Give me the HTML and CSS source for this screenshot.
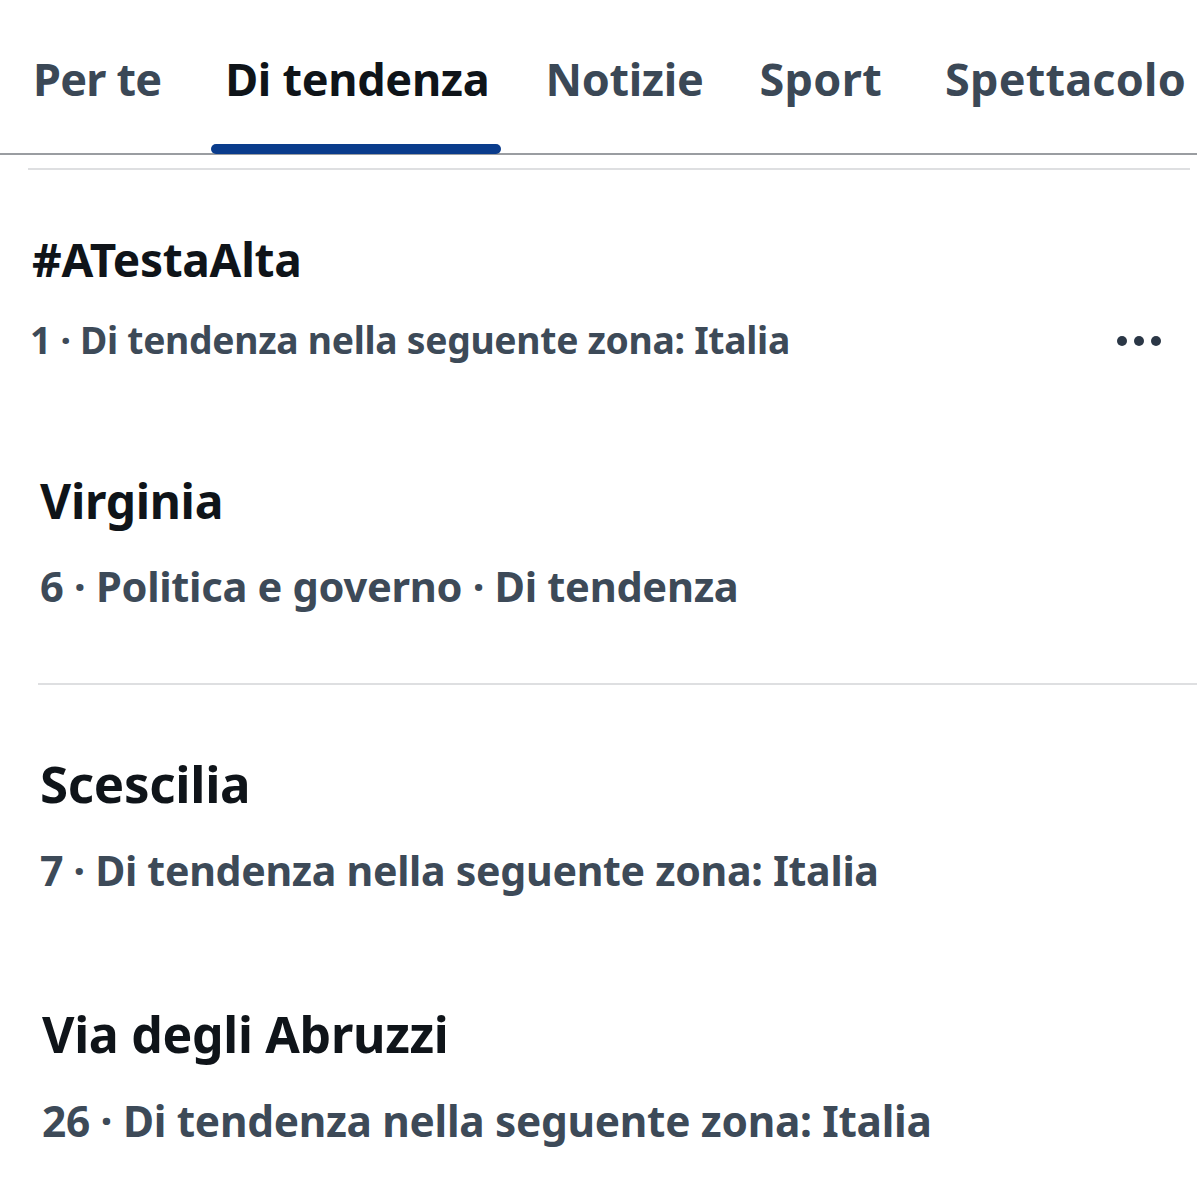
FILE: index.html
```html
<!DOCTYPE html>
<html lang="it">
<head>
<meta charset="utf-8">
<link rel="stylesheet" href="styles.css">
</head>
<body>
<div class="page">
  <nav class="tabs">
    <div class="tab tab-1">Per te</div>
    <div class="tab tab-2 active">Di tendenza</div>
    <div class="tab tab-3">Notizie</div>
    <div class="tab tab-4">Sport</div>
    <div class="tab tab-5">Spettacolo</div>
  </nav>
  <div class="rule-top"></div>

  <section class="trend trend-1">
    <div class="title">#ATestaAlta</div>
    <div class="meta-row">
      <div class="meta">1 · Di tendenza nella seguente zona: Italia</div>
      <div class="more"><span></span><span></span><span></span></div>
    </div>
  </section>

  <section class="trend trend-2">
    <div class="title">Virginia</div>
    <div class="meta">6 · Politica e governo · Di tendenza</div>
  </section>
  <div class="divider"></div>

  <section class="trend trend-3">
    <div class="title">Scescilia</div>
    <div class="meta">7 · Di tendenza nella seguente zona: Italia</div>
  </section>

  <section class="trend trend-4">
    <div class="title">Via degli Abruzzi</div>
    <div class="meta">26 · Di tendenza nella seguente zona: Italia</div>
  </section>
</div>
</body>
</html>
```

FILE: styles.css
```css
* { box-sizing: border-box; }
html, body { margin: 0; padding: 0; background: #fff; }
body {
  font-family: "Noto Sans", "Open Sans", sans-serif;
  width: 1197px;
  height: 1200px;
  overflow: hidden;
}
.page { width: 1197px; }

.tabs {
  display: flex;
  height: 155px;
  border-bottom: 2px solid #9a9da1;
  padding-left: 33px;
}
.tab {
  font-size: 45px;
  font-weight: 700;
  color: #3b4856;
  padding-top: 48px;
  position: relative;
  white-space: nowrap;
  letter-spacing: -0.3px;
}
.tab-1 { letter-spacing: -0.8px; }
.tab-2 { margin-left: 64px; color: #0f1419; }
.tab-3 { margin-left: 56px; }
.tab-4 { margin-left: 56px; letter-spacing: 0.3px; }
.tab-5 { margin-left: 63px; letter-spacing: 0.2px; }
.tab.active::after {
  content: "";
  position: absolute;
  left: -14px;
  right: -12px;
  bottom: -1px;
  height: 10px;
  border-radius: 5px;
  background: #0a3c8c;
}

.rule-top {
  margin: 13px 7px 0 28px;
  height: 2px;
  background: #dedfe1;
}

.trend { white-space: nowrap; }
.title {
  font-size: 50px;
  font-weight: 700;
  color: #0f1419;
  line-height: 60px;
  letter-spacing: -0.3px;
}
.meta {
  font-size: 42px;
  font-weight: 700;
  color: #3d4a58;
  line-height: 54px;
  letter-spacing: -0.3px;
}
.meta-row {
  display: flex;
  align-items: flex-start;
  justify-content: space-between;
  padding-right: 36px;
}
.more {
  display: flex;
  gap: 7px;
  margin-top: 47px;
}
.more span {
  width: 10px; height: 10px;
  border-radius: 50%;
  background: #2b3746;
}

.trend-1 { padding: 59px 0 0 32px; }
.trend-1 .title { font-size: 46px; }
.trend-1 .meta { font-size: 37.3px; margin-top: 24px; margin-left: -2px; }

.trend-2 { padding: 104px 0 0 40px; }
.trend-2 .title { font-size: 48px; }
.trend-2 .meta { font-size: 41.6px; margin-top: 28px; }

.divider {
  margin: 70px 0 0 38px;
  height: 2px;
  background: #dedfe1;
}

.trend-3 { padding: 68px 0 0 40px; }
.trend-3 .title { font-size: 51px; }
.trend-3 .meta { font-size: 41.1px; margin-top: 30px; }

.trend-4 { padding: 107px 0 0 42px; }
.trend-4 .title { font-size: 50px; }
.trend-4 .meta { font-size: 42.4px; margin-top: 30px; }
```
